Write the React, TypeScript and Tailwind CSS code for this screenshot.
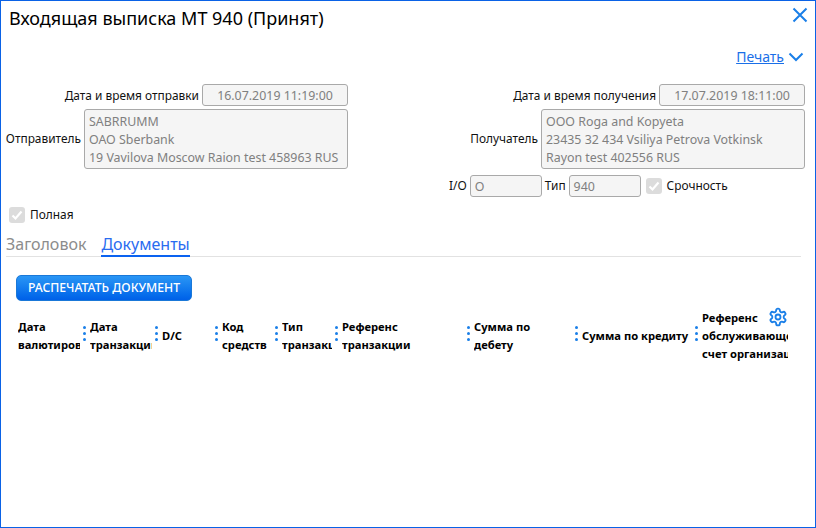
const font = { fontFamily: '"Noto Sans", "Noto Sans CJK SC", sans-serif' };

function Field({ className, children }: { className: string; children: React.ReactNode }) {
  return (
    <div className={`rounded-[3px] border border-[#a9a9a9] bg-[#f5f5f5] text-[12.4px] text-[#808080] ${className}`}>
      {children}
    </div>
  );
}

function Check() {
  return (
    <span className="flex h-4 w-4 items-center justify-center rounded-[3px] bg-[#dcdcdc]">
      <svg width="12" height="12" viewBox="0 0 12 12" fill="none" stroke="#fff" strokeWidth="2.2">
        <path d="M1.5 6.5 L4.5 9.5 L10.5 2.5" />
      </svg>
    </span>
  );
}

const columns: { w: string; lines: string[] }[] = [
  { w: "w-[66px] pr-[4px]", lines: ["Дата", "валютирования"] },
  { w: "w-[66px] pr-[4px]", lines: ["Дата", "транзакции"] },
  { w: "w-[54px] pr-[4px]", lines: ["D/C"] },
  { w: "w-[54px] pr-[4px]", lines: ["Код", "средств"] },
  { w: "w-[54px] pr-[4px]", lines: ["Тип", "транзакции"] },
  { w: "w-[126px] pr-[4px]", lines: ["Референс", "транзакции"] },
  { w: "w-[102px] pr-[4px]", lines: ["Сумма по", "дебету"] },
  { w: "w-[114px] pr-[4px]", lines: ["Сумма по кредиту"] },
  { w: "w-[86px]", lines: ["Референс", "обслуживающего", "счет организации"] },
];

function Dots() {
  return (
    <div className="-ml-px mr-px -mt-[4px] flex w-[6px] shrink-0 flex-col items-start gap-[3px]">
      <span className="h-[3px] w-[3px] rounded-full bg-[#1a7fe8]" />
      <span className="h-[3px] w-[3px] rounded-full bg-[#1a7fe8]" />
      <span className="h-[3px] w-[3px] rounded-full bg-[#1a7fe8]" />
    </div>
  );
}

export default function App() {
  return (
    <div style={font} className="relative flex h-[528px] w-[816px] flex-col overflow-hidden border border-[#0a62e6] bg-white text-[11.9px] text-[#111]">
      <div className="flex items-start justify-between pl-2 pr-[7px] pt-[3px]">
        <h1 className="text-[18px] leading-[28px] font-normal text-black">Входящая выписка MT 940 (Принят)</h1>
        <svg className="mt-[3px]" width="16" height="16" viewBox="0 0 16 16" fill="none" stroke="#1a7fe8" strokeWidth="2">
          <path d="M1.5 1.5 L14.5 14.5 M14.5 1.5 L1.5 14.5" />
        </svg>
      </div>

      <div className="mt-[15px] flex items-center justify-end gap-[4px] pr-[11px] text-[14px] leading-[20px]">
        <span className="text-[#1a6fe8] underline">Печать</span>
        <svg width="16" height="10" viewBox="0 0 16 10" fill="none" stroke="#1a7fe8" strokeWidth="2">
          <path d="M1.5 1.5 L8 8 L14.5 1.5" />
        </svg>
      </div>

      <div className="mt-[17px] flex pr-[10px]">
        <div className="flex w-[347px] flex-col items-end gap-[3px]">
          <div className="flex items-center gap-[3px]">
            <span className="pt-px">Дата и время отправки</span>
            <Field className="h-[22px] w-[146px] text-center leading-[21px]">16.07.2019 11:19:00</Field>
          </div>
          <div className="flex items-center gap-[3px]">
            <span>Отправитель</span>
            <Field className="h-[60px] w-[264px] px-[4px] pt-[3px] leading-[18px]">
              <div>SABRRUMM</div>
              <div>OAO Sberbank</div>
              <div>19 Vavilova Moscow Raion test 458963 RUS</div>
            </Field>
          </div>
        </div>
        <div className="flex flex-1 flex-col items-end gap-[3px]">
          <div className="flex items-center gap-[3px]">
            <span className="pt-px">Дата и время получения</span>
            <Field className="h-[22px] w-[146px] text-center leading-[21px]">17.07.2019 18:11:00</Field>
          </div>
          <div className="flex items-center gap-[3px]">
            <span>Получатель</span>
            <Field className="h-[60px] w-[264px] px-[4px] pt-[3px] leading-[18px]">
              <div>OOO Roga and Kopyeta</div>
              <div>23435 32 434 Vsiliya Petrova Votkinsk</div>
              <div>Rayon test 402556 RUS</div>
            </Field>
          </div>
          <div className="mt-[3px] flex w-[356px] items-center">
            <span className="mr-[3px]">I/O</span>
            <Field className="h-[22px] w-[72px] px-[4px] leading-[21px]">O</Field>
            <span className="ml-[3px] mr-[3px]">Тип</span>
            <Field className="h-[22px] w-[72px] px-[4px] leading-[21px]">940</Field>
            <span className="ml-[5px] mr-[5px]"><Check /></span>
            <span>Срочность</span>
          </div>
        </div>
      </div>

      <div className="mt-[9px] flex items-center gap-[5px] pl-2">
        <Check />
        <span>Полная</span>
      </div>

      <div className="ml-[5px] mr-[14px] mt-[10px] flex gap-[15px] border-b border-[#e2e2e2] text-[16px] leading-[21px]">
        <span className="text-[#8c8c8c]">Заголовок</span>
        <span className="-mb-px border-b-2 border-[#0a62f0] text-[#2a6cf0]">Документы</span>
      </div>

      <button className="ml-[15px] mt-[18px] h-[26px] w-[176px] rounded-[5px] border border-[#1a78d8] bg-gradient-to-b from-[#2a96f5] to-[#0060e8] text-[12.2px] font-medium text-white">
        РАСПЕЧАТАТЬ ДОКУМЕНТ
      </button>

      <div className="ml-[17px] mt-[7px] flex h-[56px] w-[771px] items-center overflow-hidden text-[11.2px] font-bold leading-[18px] text-black">
        {columns.map((c, i) => (
          <div key={i} className="flex shrink-0 items-center">
            {i > 0 && <Dots />}
            <div className={`${c.w} overflow-hidden`}>
              {c.lines.map((l) => (
                <div key={l} className="overflow-hidden whitespace-nowrap">{l}</div>
              ))}
            </div>
          </div>
        ))}
      </div>

      <svg className="absolute right-[27px] top-[306px]" width="20" height="20" viewBox="0 0 24 24" fill="none" stroke="#1a7fe8" strokeWidth="2.2" strokeLinecap="round" strokeLinejoin="round">
        <circle cx="12" cy="12" r="3" />
        <path d="M12.2 2h-.4a2 2 0 0 0-2 2v.2a2 2 0 0 1-1 1.7l-.4.3a2 2 0 0 1-2 0l-.2-.1a2 2 0 0 0-2.7.7l-.2.4a2 2 0 0 0 .7 2.7l.2.1a2 2 0 0 1 1 1.7v.5a2 2 0 0 1-1 1.8l-.2.1a2 2 0 0 0-.7 2.7l.2.4a2 2 0 0 0 2.7.7l.2-.1a2 2 0 0 1 2 0l.4.3a2 2 0 0 1 1 1.7v.2a2 2 0 0 0 2 2h.4a2 2 0 0 0 2-2v-.2a2 2 0 0 1 1-1.7l.4-.3a2 2 0 0 1 2 0l.2.1a2 2 0 0 0 2.7-.7l.2-.4a2 2 0 0 0-.7-2.7l-.2-.1a2 2 0 0 1-1-1.8v-.5a2 2 0 0 1 1-1.7l.2-.1a2 2 0 0 0 .7-2.7l-.2-.4a2 2 0 0 0-2.7-.7l-.2.1a2 2 0 0 1-2 0l-.4-.3a2 2 0 0 1-1-1.7V4a2 2 0 0 0-2-2z" />
      </svg>
    </div>
  );
}
